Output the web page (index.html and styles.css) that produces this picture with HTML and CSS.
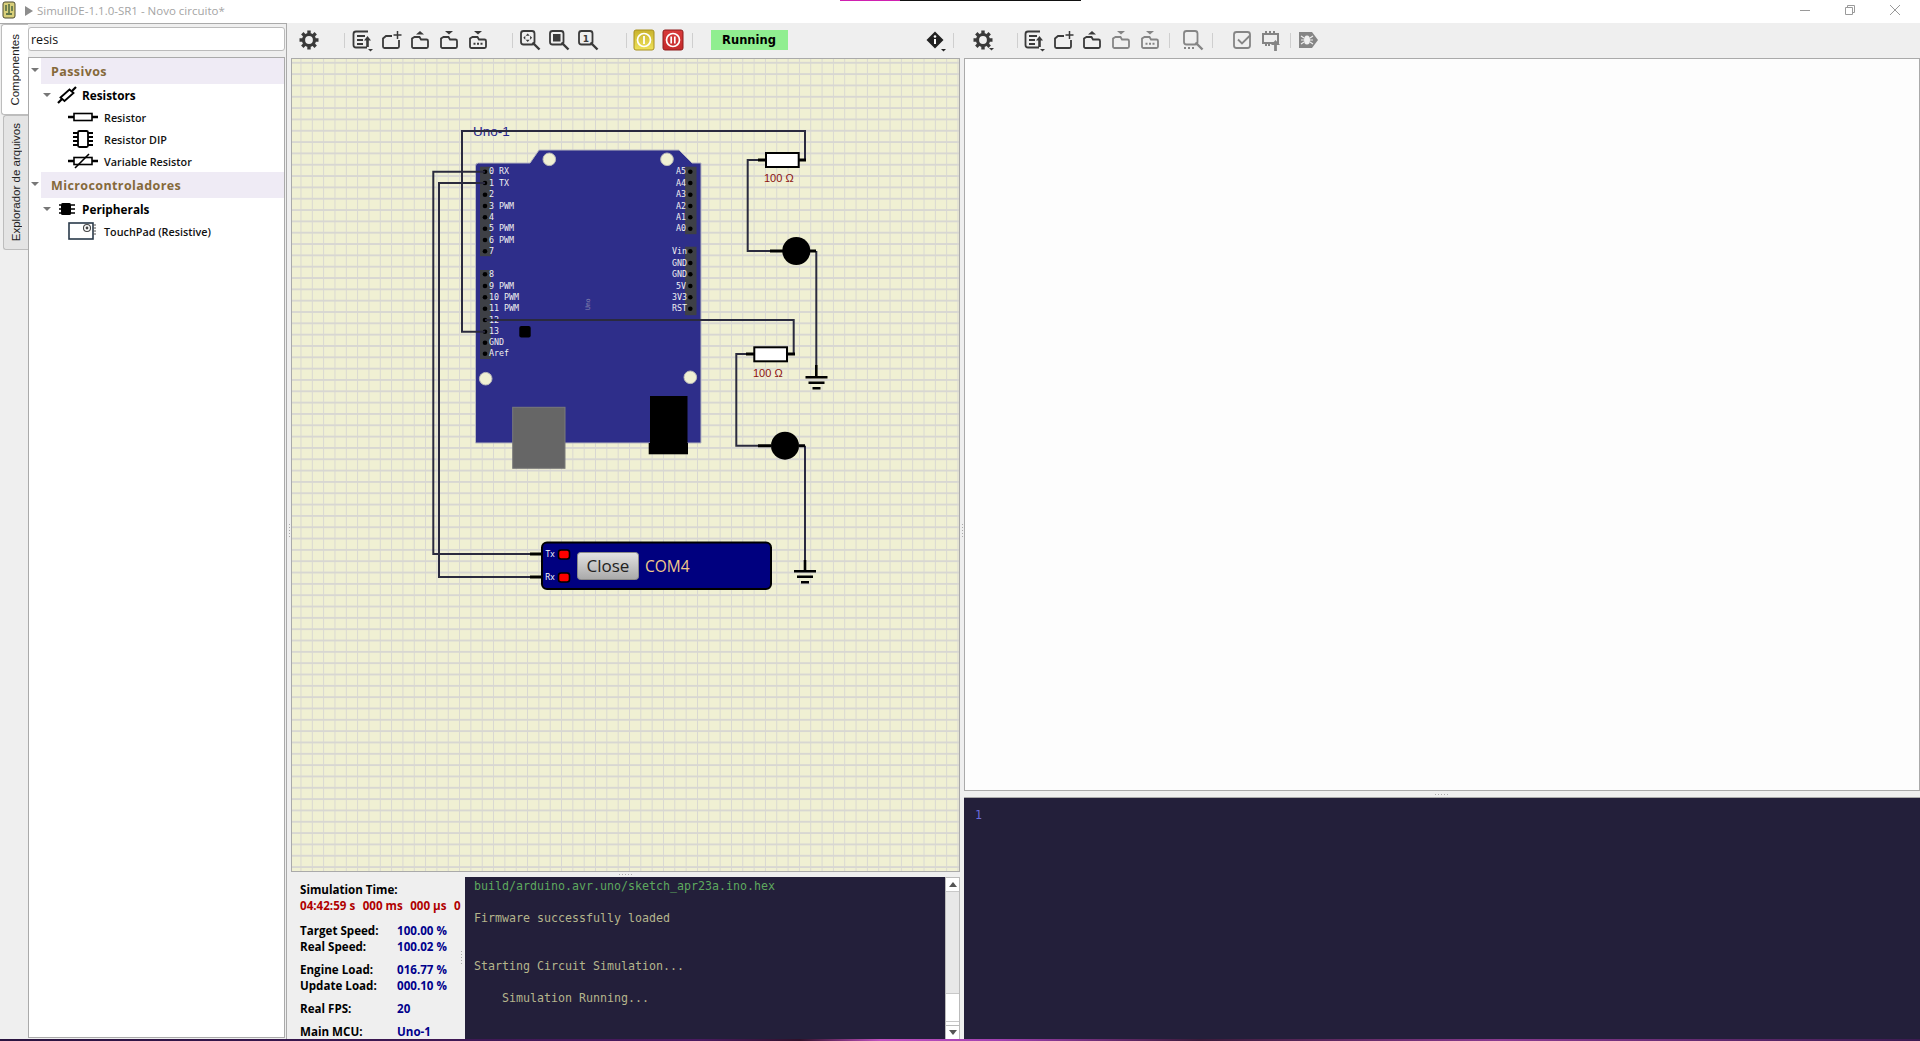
FILE: index.html
```html
<!DOCTYPE html>
<html lang="pt">
<head>
    <meta charset="UTF-8">
    <title>SimulIDE-1.1.0-SR1 - Novo circuito*</title>
    <link rel="stylesheet" href="styles.css">
</head>
<body>
    <!-- shared toolbar icons -->
    <svg class="icon-defs" width="0" height="0">
        <symbol id="i-gear" viewBox="0 0 24 24">
            <circle cx="12" cy="12" r="5.5" fill="none" stroke="currentColor" stroke-width="3.2"/>
            <path d="M12 2.500v4M12 17.500v4M2.500 12h4M17.500 12h4M5.300 5.300l2.800 2.800M15.900 15.900l2.800 2.800M5.300 18.700l2.800-2.800M15.900 8.100l2.800-2.800" stroke="currentColor" stroke-width="3.400" fill="none"/>
        </symbol>
        <symbol id="i-drop" viewBox="0 0 24 24">
            <path d="M18 20h5l-2.500 2.500z" fill="currentColor"/>
        </symbol>
        <symbol id="i-list" viewBox="0 0 24 24">
            <path d="M18 3.500H6A2.500 2.500 0 0 0 3.500 6v11A2.500 2.500 0 0 0 6 19.500h11" fill="none" stroke="currentColor" stroke-width="1.800"/>
            <path d="M7 8h8M7 12h6M7 16h6" stroke="currentColor" stroke-width="2" fill="none"/>
            <path d="M17.500 19v-7" stroke="currentColor" stroke-width="2.600"/>
            <path d="M14 12.500l3.500-4.500 3.500 4.500z" fill="currentColor"/>
            <path d="M18 21h5l-2.500 2.500z" fill="currentColor"/>
        </symbol>
        <symbol id="i-new" viewBox="0 0 24 24">
            <path d="M13 8H7L4 10.500v8A1.500 1.500 0 0 0 5.500 20h13a1.500 1.500 0 0 0 1.500-1.500V12" fill="none" stroke="currentColor" stroke-width="1.800"/>
            <path d="M18.500 3v8M14.500 7h8" stroke="currentColor" stroke-width="1.500" fill="none"/>
        </symbol>
        <symbol id="i-open" viewBox="0 0 24 24">
            <path d="M4 18.500V10.500L6.500 9h5l1.500 2.500h5.500A1.500 1.500 0 0 1 20 13v5.500a1.500 1.500 0 0 1-1.500 1.500h-13A1.500 1.500 0 0 1 4 18.500z" fill="none" stroke="currentColor" stroke-width="1.800"/>
            <path d="M8 6.500L12 3l4 3.500z" fill="currentColor"/>
        </symbol>
        <symbol id="i-save" viewBox="0 0 24 24">
            <path d="M4 18.500V10.500L6.500 9h5l1.500 2.500h5.500A1.500 1.500 0 0 1 20 13v5.500a1.500 1.500 0 0 1-1.500 1.500h-13A1.500 1.500 0 0 1 4 18.500z" fill="none" stroke="currentColor" stroke-width="1.800"/>
            <path d="M8 3h8l-4 3.500z" fill="currentColor"/>
        </symbol>
        <symbol id="i-saveas" viewBox="0 0 24 24">
            <path d="M4 18.500V10.500L6.500 9h5l1.500 2.500h5.500A1.500 1.500 0 0 1 20 13v5.500a1.500 1.500 0 0 1-1.500 1.500h-13A1.500 1.500 0 0 1 4 18.500z" fill="none" stroke="currentColor" stroke-width="1.800"/>
            <path d="M8 3h8l-4 3.500z" fill="currentColor"/>
            <path d="M7.500 15.800h2M11 15.800h2M14.500 15.800h2" stroke="currentColor" stroke-width="2"/>
        </symbol>
        <symbol id="i-lens" viewBox="0 0 24 24">
            <rect x="3" y="3" width="13.500" height="13.500" rx="2.500" fill="none" stroke="currentColor" stroke-width="1.800"/>
            <path d="M14.500 14.500l7 7" stroke="currentColor" stroke-width="2.400"/>
        </symbol>
    </svg>

    <div class="window">
        <header class="titlebar">
            <svg class="app-icon" width="16" height="18" viewBox="0 0 16 18">
                <rect x="2" y="1" width="12" height="16" rx="2" fill="#d8cf7a" stroke="#4a4a30"/>
                <path d="M5 4v6M8 3v9M11 5v5M5 13h6" stroke="#3a5a3a" stroke-width="1.300" fill="none"/>
            </svg>
            <span class="title-arrow"></span>
            <span class="title-text">SimulIDE-1.1.0-SR1 - Novo circuito*</span>
            <div class="win-controls">
                <svg width="10" height="10" viewBox="0 0 10 10"><path d="M0 5.500h10" stroke="#9a9a9a"/></svg>
                <svg width="10" height="10" viewBox="0 0 10 10"><path d="M.5 2.500h7v7h-7zM2.500 2.500v-2h7v7h-2" fill="none" stroke="#9a9a9a"/></svg>
                <svg width="10" height="10" viewBox="0 0 10 10"><path d="M0 0l10 10M10 0L0 10" stroke="#9a9a9a"/></svg>
            </div>
            <div class="screen-sliver"></div>
        </header>

        <div class="main">
            <nav class="side-tabs">
                <div class="side-tab active"><span>Componentes</span></div>
                <div class="side-tab"><span>Explorador de arquivos</span></div>
            </nav>

            <aside class="left-panel">
                <input class="search" type="text" value="resis">
                <div class="tree">
                    <div class="tree-head"><span class="tri"></span><div class="tree-head-label">Passivos</div></div>
                    <div class="tree-cat">
                        <span class="tri"></span>
                        <svg class="cat-icon" width="20" height="18" viewBox="0 0 20 18">
                            <path d="M1 17l4-4M15 5l4-4" stroke="#000" stroke-width="2.200"/>
                            <path d="M3.500 11.500l9-8 4 3.500-9 8z" fill="#fff" stroke="#000" stroke-width="1.800"/>
                        </svg>
                        <span>Resistors</span>
                    </div>
                    <div class="tree-item">
                        <svg width="30" height="14" viewBox="0 0 30 14">
                            <path d="M0 7h6M24 7h6" stroke="#000" stroke-width="2.600"/>
                            <rect x="6" y="3.500" width="18" height="7" fill="#fff" stroke="#000" stroke-width="1.600"/>
                        </svg>
                        <span>Resistor</span>
                    </div>
                    <div class="tree-item">
                        <svg width="30" height="20" viewBox="0 0 30 20">
                            <rect x="10" y="2" width="10" height="16" rx="1.500" fill="#fff" stroke="#000" stroke-width="1.800"/>
                            <path d="M5 4h5M5 8h5M5 12h5M5 16h5M20 4h5M20 8h5M20 12h5M20 16h5" stroke="#000" stroke-width="1.800"/>
                        </svg>
                        <span>Resistor DIP</span>
                    </div>
                    <div class="tree-item">
                        <svg width="30" height="18" viewBox="0 0 30 18">
                            <path d="M0 9h6M24 9h6" stroke="#000" stroke-width="2.600"/>
                            <rect x="6" y="5.500" width="18" height="7" fill="#fff" stroke="#000" stroke-width="1.600"/>
                            <path d="M7 16L21 2" stroke="#000" stroke-width="1.600"/>
                        </svg>
                        <span>Variable Resistor</span>
                    </div>
                    <div class="tree-head"><span class="tri"></span><div class="tree-head-label">Microcontroladores</div></div>
                    <div class="tree-cat">
                        <span class="tri"></span>
                        <svg class="cat-icon" width="20" height="14" viewBox="0 0 20 14">
                            <rect x="4" y="1" width="10" height="12" rx="1.500" fill="#000"/>
                            <path d="M2 3h2M2 7h2M2 11h2M14 3h4M14 7h4M14 11h4" stroke="#000" stroke-width="1.600"/>
                        </svg>
                        <span>Peripherals</span>
                    </div>
                    <div class="tree-item">
                        <svg width="30" height="20" viewBox="0 0 30 20">
                            <rect x="1" y="2" width="24" height="16" fill="#fff" stroke="#2a3a4a" stroke-width="1.600"/>
                            <circle cx="19" cy="7" r="3.500" fill="none" stroke="#444" stroke-width="1.100"/>
                            <circle cx="19" cy="7" r="1.400" fill="#444"/>
                            <path d="M25 4h3M25 7h3M25 10h3M25 13h3" stroke="#555"/>
                        </svg>
                        <span>TouchPad (Resistive)</span>
                    </div>
                </div>
            </aside>

            <div class="v-split"><i class="dots-v"></i></div>

            <section class="center">
                <div class="toolbar">
                    <button class="tool tool-first"><svg width="24" height="24"><use href="#i-gear"/></svg></button>
                    <span class="sep sep-a"></span>
                    <button class="tool"><svg width="24" height="24"><use href="#i-list"/></svg></button>
                    <button class="tool"><svg width="24" height="24"><use href="#i-new"/></svg></button>
                    <button class="tool"><svg width="24" height="24"><use href="#i-open"/></svg></button>
                    <button class="tool"><svg width="24" height="24"><use href="#i-save"/></svg></button>
                    <button class="tool"><svg width="24" height="24"><use href="#i-saveas"/></svg></button>
                    <span class="sep sep-a2"></span>
                    <button class="tool">
                        <svg width="24" height="24">
                            <use href="#i-lens"/>
                            <path d="M9.700 5.500l2 2.200h-4zM9.700 14l2-2.200h-4zM5.300 9.700l2-2v4zM14.100 9.700l-2-2v4z" fill="currentColor"/>
                        </svg>
                    </button>
                    <button class="tool">
                        <svg width="24" height="24">
                            <use href="#i-lens"/>
                            <rect x="6" y="6" width="7.500" height="7.500" fill="currentColor"/>
                        </svg>
                    </button>
                    <button class="tool">
                        <svg width="24" height="24">
                            <use href="#i-lens"/>
                            <text x="9.800" y="14" class="lens-one">1</text>
                        </svg>
                    </button>
                    <span class="sep sep-b"></span>
                    <button class="tool">
                        <svg width="22" height="22" viewBox="0 0 22 22">
                            <defs>
                                <linearGradient id="g-yellow" x1="0" y1="0" x2="0" y2="1">
                                    <stop offset="0" stop-color="#c9b32c"/><stop offset="1" stop-color="#efe25a"/>
                                </linearGradient>
                                <linearGradient id="g-red" x1="0" y1="0" x2="0" y2="1">
                                    <stop offset="0" stop-color="#d83a3a"/><stop offset="1" stop-color="#c42a2a"/>
                                </linearGradient>
                            </defs>
                            <rect x="1" y="1" width="20" height="20" rx="2" fill="url(#g-yellow)" stroke="#a8901e"/>
                            <circle cx="11" cy="11" r="6.500" fill="none" stroke="#fff" stroke-width="1.700"/>
                            <path d="M11 7v8" stroke="#fff" stroke-width="1.800"/>
                        </svg>
                    </button>
                    <button class="tool">
                        <svg width="22" height="22" viewBox="0 0 22 22">
                            <rect x="1" y="1" width="20" height="20" rx="2" fill="url(#g-red)" stroke="#8e1c1c"/>
                            <circle cx="11" cy="11" r="6.500" fill="none" stroke="#fff" stroke-width="1.700"/>
                            <path d="M9.200 7.500v7M12.800 7.500v7" stroke="#fff" stroke-width="1.700"/>
                        </svg>
                    </button>
                    <span class="sep sep-c"></span>
                    <div class="run-state">Running</div>
                    <button class="tool tool-push">
                        <svg width="24" height="24" viewBox="0 0 24 24">
                            <path d="M12 3.500l8.500 8.500-8.500 8.500L3.500 12z" fill="#222"/>
                            <circle cx="12" cy="8.500" r="1.300" fill="#fff"/>
                            <path d="M12 11v5" stroke="#fff" stroke-width="2"/>
                            <path d="M18 21h5l-2.500 2.500z" fill="#222"/>
                        </svg>
                    </button>
                    <span class="sep sep-d"></span>
                </div>

                <div class="canvas">
                    <svg class="circuit" width="667" height="812" viewBox="292 59 667 812">
                        <text x="473" y="136" class="comp-name">Uno-1</text>

                        <!-- board -->
                        <path class="board" d="M475.500 166q0-3 3-3H530l9-13h140l13 13h9v280H475.500z"/>
                        <circle class="hole" cx="549.300" cy="159.300" r="6.300"/>
                        <circle class="hole" cx="667" cy="159.300" r="6.300"/>
                        <circle class="hole" cx="485.700" cy="378.700" r="6.300"/>
                        <circle class="hole" cx="690.300" cy="377.300" r="6.300"/>
                        <rect class="header" x="480" y="166.700" width="11" height="89.500"/>
                        <rect class="header" x="480" y="270" width="11" height="89"/>
                        <rect class="header" x="685" y="166.700" width="11.500" height="67.500"/>
                        <rect class="header" x="685" y="246.700" width="11.500" height="68.500"/>

                        <g class="pins">
                            <circle cx="485" cy="171.700" r="2.300"/><circle cx="485" cy="183" r="2.300"/>
                            <circle cx="485" cy="194.700" r="2.300"/><circle cx="485" cy="206" r="2.300"/>
                            <circle cx="485" cy="217.300" r="2.300"/><circle cx="485" cy="228.700" r="2.300"/>
                            <circle cx="485" cy="240" r="2.300"/><circle cx="485" cy="251.300" r="2.300"/>
                            <circle cx="485" cy="274.300" r="2.300"/><circle cx="485" cy="286" r="2.300"/>
                            <circle cx="485" cy="297.300" r="2.300"/><circle cx="485" cy="308.700" r="2.300"/>
                            <circle cx="485" cy="320" r="2.300"/><circle cx="485" cy="331.700" r="2.300"/>
                            <circle cx="485" cy="342.700" r="2.300"/><circle cx="485" cy="353.700" r="2.300"/>
                            <circle cx="690.300" cy="171.700" r="2.300"/><circle cx="690.300" cy="183" r="2.300"/>
                            <circle cx="690.300" cy="194.700" r="2.300"/><circle cx="690.300" cy="206" r="2.300"/>
                            <circle cx="690.300" cy="217.300" r="2.300"/><circle cx="690.300" cy="228.700" r="2.300"/>
                            <circle cx="690.300" cy="251.300" r="2.300"/><circle cx="690.300" cy="263" r="2.300"/>
                            <circle cx="690.300" cy="274.300" r="2.300"/><circle cx="690.300" cy="286" r="2.300"/>
                            <circle cx="690.300" cy="297.300" r="2.300"/><circle cx="690.300" cy="308.700" r="2.300"/>
                        </g>

                        <g class="pin-label">
                            <text x="489" y="174">0 RX</text><text x="489" y="185.500">1 TX</text>
                            <text x="489" y="197">2</text><text x="489" y="208.500">3 PWM</text>
                            <text x="489" y="219.500">4</text><text x="489" y="231">5 PWM</text>
                            <text x="489" y="242.500">6 PWM</text><text x="489" y="253.500">7</text>
                            <text x="489" y="276.500">8</text><text x="489" y="288.500">9 PWM</text>
                            <text x="489" y="299.500">10 PWM</text><text x="489" y="311">11 PWM</text>
                            <text x="489" y="322.500">12</text><text x="489" y="334">13</text>
                            <text x="489" y="345">GND</text><text x="489" y="356">Aref</text>
                        </g>
                        <g class="pin-label pin-label-end">
                            <text x="686" y="174">A5</text><text x="686" y="185.500">A4</text>
                            <text x="686" y="197">A3</text><text x="686" y="208.500">A2</text>
                            <text x="686" y="219.500">A1</text><text x="686" y="231">A0</text>
                            <text x="687" y="253.500">Vin</text><text x="687" y="265.500">GND</text>
                            <text x="687" y="276.500">GND</text><text x="686" y="288.500">5V</text>
                            <text x="687" y="299.500">3V3</text><text x="687" y="311">RST</text>
                        </g>

                        <text class="board-name" transform="translate(590 310) rotate(-90)">Uno</text>
                        <rect x="519.300" y="326" width="11.400" height="11.400" rx="2" fill="#000"/>
                        <rect x="512.700" y="407.300" width="52.300" height="61" fill="#666" stroke="#7a7a7a"/>
                        <rect x="650" y="396" width="37.500" height="47" fill="#000"/>
                        <rect x="648.700" y="443" width="39.300" height="11.300" fill="#000"/>

                        <!-- wires -->
                        <g class="wire">
                            <path d="M485 331.700H462V131H805V160"/>
                            <path d="M485 171.700H433.300V554H530"/>
                            <path d="M485 183H439V577H530"/>
                            <path d="M485 320H793.700V354"/>
                            <path d="M758 160H747.700V251H770"/>
                            <path d="M816.300 251V365"/>
                            <path d="M746 354H736.300V445.700H758"/>
                            <path d="M805 445.700V560"/>
                        </g>

                        <!-- resistors and leds -->
                        <g class="lead">
                            <path d="M758 160h8M799 160h7"/>
                            <path d="M746 354h8M787 354h8"/>
                            <path d="M770 251h13M810 251h6"/>
                            <path d="M758 445.700h13M799 445.700h6"/>
                            <path d="M530 554h12M530 577h12"/>
                        </g>
                        <rect class="res" x="766" y="153" width="32.700" height="14"/>
                        <rect class="res" x="754.300" y="347.300" width="32.700" height="14"/>
                        <text class="res-val" x="764" y="181.500">100 Ω</text>
                        <text class="res-val" x="753" y="376.500">100 Ω</text>
                        <circle cx="796.300" cy="251" r="14"/>
                        <circle cx="785" cy="445.700" r="14"/>

                        <!-- grounds -->
                        <g class="ground">
                            <path d="M816.300 365v12"/>
                            <path d="M805.500 377.300h22M808.500 382.700h16M812.500 388.300h8"/>
                            <path d="M805 560v11.300"/>
                            <path d="M794 571.300h22M797 576.700h16M801 582.300h8"/>
                        </g>

                        <!-- serial port -->
                        <rect class="port" x="542" y="542.500" width="229" height="46.500" rx="5"/>
                        <text class="port-pin" x="545.500" y="556.500">Tx</text>
                        <text class="port-pin" x="545" y="579.500">Rx</text>
                        <rect class="port-led" x="558.500" y="550" width="11" height="9" rx="2.500"/>
                        <rect class="port-led" x="558.500" y="573" width="11" height="9" rx="2.500"/>
                        <defs>
                            <linearGradient id="g-close" x1="0" y1="0" x2="0" y2="1">
                                <stop offset="0" stop-color="#e2e2e2"/><stop offset="1" stop-color="#a9a9a9"/>
                            </linearGradient>
                        </defs>
                        <rect x="577.500" y="552.500" width="61" height="27" rx="3" fill="url(#g-close)" stroke="#8a8a8a"/>
                        <text class="port-close" x="586.500" y="572">Close</text>
                        <text class="port-name" x="645" y="572">COM4</text>
                    </svg>
                </div>

                <div class="h-split"><i class="dots-h"></i></div>

                <div class="bottom-row">
                    <div class="sim-info">
                        <div class="sim-title">Simulation Time:</div>
                        <div class="sim-time"><span>04:42:59 s</span><span>000 ms</span><span>000 µs</span><span>0</span></div>
                        <div class="sim-row sim-first"><b>Target Speed:</b><em>100.00 %</em></div>
                        <div class="sim-row"><b>Real Speed:</b><em>100.02 %</em></div>
                        <div class="sim-row sim-gap"><b>Engine Load:</b><em>016.77 %</em></div>
                        <div class="sim-row"><b>Update Load:</b><em>000.10 %</em></div>
                        <div class="sim-row sim-gap"><b>Real FPS:</b><em>20</em></div>
                        <div class="sim-row sim-gap"><b>Main MCU:</b><em>Uno-1</em></div>
                    </div>
                    <i class="dots-v dots-info"></i>
                    <pre class="output"><span class="out-path">build/arduino.avr.uno/sketch_apr23a.ino.hex</span>

Firmware successfully loaded


Starting Circuit Simulation...

    Simulation Running...</pre>
                    <div class="scrollbar">
                        <div class="sb-btn"><span class="sb-up"></span></div>
                        <div class="sb-track"></div>
                        <div class="sb-handle"></div>
                        <div class="sb-btn sb-btn-down"><span class="sb-down"></span></div>
                    </div>
                </div>
            </section>

            <div class="v-split"><i class="dots-v"></i></div>

            <section class="right">
                <div class="toolbar">
                    <button class="tool tool-first-r">
                        <svg width="24" height="24"><use href="#i-gear"/><use href="#i-drop"/></svg>
                    </button>
                    <span class="sep sep-e"></span>
                    <button class="tool"><svg width="24" height="24"><use href="#i-list"/></svg></button>
                    <button class="tool"><svg width="24" height="24"><use href="#i-new"/></svg></button>
                    <button class="tool"><svg width="24" height="24"><use href="#i-open"/></svg></button>
                    <button class="tool off"><svg width="24" height="24"><use href="#i-save"/></svg></button>
                    <button class="tool off"><svg width="24" height="24"><use href="#i-saveas"/></svg></button>
                    <span class="sep sep-f"></span>
                    <button class="tool off">
                        <svg width="24" height="24">
                            <use href="#i-lens"/>
                            <path d="M3 20h2M7 20h2M11 20h2" stroke="currentColor" stroke-width="1.800"/>
                        </svg>
                    </button>
                    <span class="sep sep-g"></span>
                    <button class="tool off">
                        <svg width="24" height="24" viewBox="0 0 24 24">
                            <rect x="4" y="4" width="16" height="16" rx="2.500" fill="none" stroke="currentColor" stroke-width="1.800"/>
                            <path d="M8 11.500l4 4 8-8" fill="none" stroke="currentColor" stroke-width="1.800"/>
                        </svg>
                    </button>
                    <button class="tool off">
                        <svg width="24" height="24" viewBox="0 0 24 24">
                            <rect x="4" y="6" width="15" height="9" fill="none" stroke="currentColor" stroke-width="2"/>
                            <path d="M7 3v3M11 3v3M15 3v3M7 15v3M10 15v3" stroke="currentColor" stroke-width="2"/>
                            <path d="M16.500 23v-7" stroke="currentColor" stroke-width="2.800"/>
                            <path d="M12 17l4.500-5 4.500 5z" fill="currentColor"/>
                        </svg>
                    </button>
                    <span class="sep sep-f2"></span>
                    <button class="tool off">
                        <svg width="24" height="24" viewBox="0 0 24 24">
                            <path d="M3 4h13l6 8-6 8H3z" fill="currentColor"/>
                            <ellipse cx="11" cy="12" rx="3" ry="4.500" fill="#efefef"/>
                            <path d="M5 8l3 2M5 12h3M5 16l3-2M17 8l-3 2M17 12h-3M17 16l-3-2" stroke="#efefef" stroke-width="1.200"/>
                        </svg>
                    </button>
                </div>
                <div class="editor"></div>
                <div class="h-split h-split-r"><i class="dots-h"></i></div>
                <div class="code"><span class="line-no">1</span></div>
            </section>
        </div>

        <div class="wallpaper"></div>
    </div>
</body>
</html>
```

FILE: styles.css
```css
html, body {
    margin: 0;
    padding: 0;
    height: 100%;
    overflow: hidden;
}
body {
    font-family: "Open Sans", "Noto Sans", sans-serif;
    font-size: 12px;
    color: #222;
    background: #efefef;
}
.icon-defs {
    position: absolute;
}
.window {
    display: flex;
    flex-direction: column;
    width: 1920px;
    height: 1041px;
}

/* title bar */
.titlebar {
    position: relative;
    display: flex;
    align-items: center;
    height: 23px;
    flex: none;
    background: #fff;
}
.app-icon {
    margin-left: 1px;
    margin-top: -3px;
}
.title-arrow {
    width: 0;
    height: 0;
    margin: -1px 4px 0 8px;
    border-left: 8px solid #8d8d8d;
    border-top: 5px solid transparent;
    border-bottom: 5px solid transparent;
}
.title-text {
    margin-top: -2px;
    color: #a4a4a4;
    font-size: 11.5px;
}
.win-controls {
    display: flex;
    gap: 35px;
    margin-left: auto;
    margin-right: 20px;
    margin-top: -3px;
}
.screen-sliver {
    position: absolute;
    top: 0;
    left: 840px;
    width: 241px;
    height: 1px;
    background: linear-gradient(to right, #d020b0 0, #d020b0 60px, #111 60px);
}

.main {
    display: flex;
    flex: 1;
    min-height: 0;
}

/* left side */
.side-tabs {
    flex: none;
    width: 28px;
    border-top: 1px solid #aaa;
    box-sizing: border-box;
}
.side-tab {
    display: flex;
    align-items: center;
    justify-content: center;
    box-sizing: border-box;
    margin-left: 3px;
    width: 25px;
    height: 135px;
    background: #e4e4e4;
    border: 1px solid #bdbdbd;
    border-right: none;
    border-radius: 3px 0 0 3px;
}
.side-tab span {
    writing-mode: vertical-rl;
    transform: rotate(180deg);
    font-family: "Liberation Sans", sans-serif;
    font-size: 11.5px;
    white-space: nowrap;
}
.side-tab.active {
    margin-left: 1px;
    width: 27px;
    height: 91px;
    background: #fff;
}
.left-panel {
    display: flex;
    flex-direction: column;
    flex: none;
    box-sizing: border-box;
    width: 259px;
    padding-top: 3px;
    padding-right: 1px;
    border-top: 1px solid #aaa;
    border-right: 1px solid #aaa;
}
.search {
    box-sizing: border-box;
    width: 257px;
    height: 24px;
    padding: 0 2px;
    margin: 0;
    border: 1px solid #bbb;
    border-radius: 3px;
    outline: none;
    font-family: "Open Sans", sans-serif;
    font-size: 12.5px;
    color: #111;
    background: #fff;
}
.tree {
    flex: 1;
    box-sizing: border-box;
    width: 257px;
    margin-top: 6px;
    margin-bottom: 1px;
    border: 1px solid #aaa;
    background: #fff;
    font-weight: 600;
}
.tri {
    flex: none;
    width: 0;
    height: 0;
    border-top: 4px solid #777;
    border-left: 4px solid transparent;
    border-right: 4px solid transparent;
}
.tree-head {
    display: flex;
    align-items: center;
    height: 26px;
}
.tree-head .tri {
    margin: -3px 2px 0 2px;
}
.tree-head-label {
    display: flex;
    align-items: center;
    flex: 1;
    height: 100%;
    padding-left: 10px;
    background: #efebf5;
    color: #85693a;
    font-size: 12.5px;
    font-weight: 700;
    letter-spacing: 0.4px;
}
.tree-cat {
    display: flex;
    align-items: center;
    height: 22px;
    padding-left: 14px;
    font-size: 11.8px;
    font-weight: 700;
    color: #000;
}
.cat-icon {
    margin: 0 5px 0 6px;
}
.tree-item {
    display: flex;
    align-items: center;
    gap: 6px;
    height: 22px;
    padding-left: 39px;
    font-size: 10.8px;
    color: #111;
}

.v-split {
    display: flex;
    align-items: center;
    justify-content: center;
    flex: none;
    width: 4px;
}
.dots-v {
    display: block;
    width: 1px;
    height: 14px;
    background: repeating-linear-gradient(to bottom, #aaa 0, #aaa 1px, transparent 1px, transparent 3px);
}
.dots-h {
    display: block;
    width: 14px;
    height: 1px;
    background: repeating-linear-gradient(to right, #aaa 0, #aaa 1px, transparent 1px, transparent 3px);
}
.h-split {
    display: flex;
    align-items: center;
    justify-content: center;
    flex: none;
    height: 5px;
}
.h-split-r {
    height: 6px;
}

/* center */
.center {
    display: flex;
    flex-direction: column;
    flex: none;
    width: 669px;
}
.toolbar {
    display: flex;
    align-items: center;
    flex: none;
    box-sizing: border-box;
    height: 35px;
    padding-bottom: 1px;
}
.tool {
    display: flex;
    align-items: center;
    justify-content: center;
    flex: none;
    width: 29px;
    height: 29px;
    padding: 0;
    border: none;
    background: none;
    color: #3a3a3a;
}
.tool.off {
    color: #858585;
}
.tool-first {
    margin-left: 3.5px;
}
.tool-first-r {
    margin-left: 4px;
}
.tool-push {
    margin-left: auto;
}
.lens-one {
    font-family: "DejaVu Sans", sans-serif;
    font-size: 9px;
    font-weight: 700;
    text-anchor: middle;
    fill: currentColor;
}
.sep {
    flex: none;
    width: 1px;
    height: 15px;
    background: #cfcfcf;
}
.sep-a { margin: 0 3px 0 20px; }
.sep-a2 { margin: 0 3px 0 19px; }
.sep-b { margin: 0 3px 0 23px; }
.sep-c { margin: 0 18px 0 4px; }
.sep-d { margin: 0 6px 0 4px; }
.sep-e { margin: 0 2px 0 19.5px; }
.sep-f { margin: 0 9px 0 4px; }
.sep-f2 { margin: 0 3px 0 4px; }
.sep-g { margin: 0 15px 0 4px; }
.run-state {
    display: flex;
    align-items: center;
    justify-content: center;
    width: 77px;
    height: 20px;
    background: #90ee90;
    color: #000;
    font-family: "DejaVu Sans", sans-serif;
    font-size: 11.5px;
    font-weight: 700;
}

/* circuit */
.canvas {
    flex: none;
    box-sizing: border-box;
    height: 814px;
    border: 1px solid #aaa;
    background-color: #f0f0d3;
    background-image:
        linear-gradient(to right, transparent 8.1px, #d8d7d2 8.1px, #d8d7d2 9.5px, transparent 9.5px),
        linear-gradient(to bottom, transparent 3.2px, #d8d7d2 3.2px, #d8d7d2 4.6px, transparent 4.6px);
    background-size: 11.33px 11.33px;
}
.circuit {
    display: block;
}
.comp-name {
    font-family: "Liberation Sans", sans-serif;
    font-size: 13.5px;
    fill: #24248c;
}
.board {
    fill: #2e2e8a;
    stroke: #b8b8c0;
    stroke-width: 1;
}
.hole {
    fill: #f0f0d3;
    stroke: #b9b9b9;
}
.header {
    fill: #3e4046;
}
.pins circle {
    fill: #000;
}
.pin-label text {
    font-family: "DejaVu Sans Mono", monospace;
    font-size: 8.300px;
    fill: #f0f0f0;
}
.pin-label-end text {
    text-anchor: end;
}
.board-name {
    font-family: "DejaVu Sans Mono", monospace;
    font-size: 6.500px;
    fill: #8a8ab0;
}
.wire path {
    fill: none;
    stroke: #2a2a3e;
    stroke-width: 2;
}
.lead path {
    fill: none;
    stroke: #000;
    stroke-width: 3;
}
.res {
    fill: #fff;
    stroke: #000;
    stroke-width: 2;
}
.res-val {
    font-family: "Liberation Sans", sans-serif;
    font-size: 11px;
    fill: #8b0f0f;
}
.ground path {
    fill: none;
    stroke: #000;
    stroke-width: 2.600;
}
.port {
    fill: #00007f;
    stroke: #000;
    stroke-width: 2;
}
.port-pin {
    font-family: "Open Sans", sans-serif;
    font-size: 8.500px;
    fill: #fff;
}
.port-led {
    fill: #f00;
    stroke: #000;
    stroke-width: 1.600;
}
.port-close {
    font-family: "Open Sans", sans-serif;
    font-size: 17px;
    fill: #222;
}
.port-name {
    font-family: "Open Sans", sans-serif;
    font-size: 15.500px;
    fill: #f2c98a;
}

/* bottom row */
.bottom-row {
    display: flex;
    flex: 1;
    min-height: 0;
}
.sim-info {
    flex: none;
    box-sizing: border-box;
    width: 170px;
    padding: 5px 0 0 9px;
    overflow: hidden;
    font-size: 11.6px;
    line-height: 16px;
    white-space: nowrap;
}
.sim-title {
    font-weight: 700;
    color: #000;
}
.sim-time {
    display: flex;
    gap: 7.5px;
    font-weight: 700;
    color: #b00000;
}
.sim-row {
    display: grid;
    grid-template-columns: 97px 1fr;
}
.sim-row b {
    color: #000;
}
.sim-row em {
    font-style: normal;
    font-weight: 700;
    color: #00008c;
}
.sim-first {
    margin-top: 9px;
}
.sim-gap {
    margin-top: 7px;
}
.dots-info {
    flex: none;
    align-self: center;
    margin: 0 3px 0 0;
}
.output {
    flex: 1;
    margin: 0;
    padding: 1px 0 0 9px;
    overflow: hidden;
    background: #231f3a;
    color: #b5b58c;
    font-family: "DejaVu Sans Mono", monospace;
    font-size: 11.630px;
    line-height: 16px;
}
.out-path {
    color: #5ea85e;
}
.scrollbar {
    display: flex;
    flex-direction: column;
    flex: none;
    box-sizing: border-box;
    width: 15px;
    border: 1px solid #bbb;
    border-bottom: none;
    background: #fff;
}
.sb-btn {
    display: flex;
    align-items: center;
    justify-content: center;
    flex: none;
    height: 13px;
}
.sb-btn-down {
    margin-top: 3px;
    border-top: 1px solid #bbb;
}
.sb-track {
    flex: 1;
    background: #e8e8e8;
    border-top: 1px solid #c8c8c8;
}
.sb-handle {
    flex: none;
    height: 27px;
    background: #fff;
    border-top: 1px solid #c8c8c8;
    border-bottom: 1px solid #c8c8c8;
}
.sb-up {
    border-bottom: 5px solid #555;
    border-left: 4px solid transparent;
    border-right: 4px solid transparent;
}
.sb-down {
    border-top: 5px solid #555;
    border-left: 4px solid transparent;
    border-right: 4px solid transparent;
}

/* right side */
.right {
    display: flex;
    flex-direction: column;
    flex: 1;
    min-width: 0;
}
.editor {
    flex: none;
    box-sizing: border-box;
    height: 733px;
    border: 1px solid #aaa;
    background: #fdfdfd;
}
.code {
    flex: 1;
    padding: 8px 0 0 11px;
    border-top: 1px solid #aaa;
    background: #231f3a;
}
.line-no {
    color: #6c6cdc;
    font-family: "DejaVu Sans Mono", monospace;
    font-size: 11.630px;
}
.wallpaper {
    flex: none;
    height: 2px;
    background: linear-gradient(to right, #2a1440 0, #4a1a60 700px, #30102a 800px, #c050c0 880px, #a040b0 1000px, #3a1a3a 1200px, #8a3a90 1500px, #3a1a50 1920px);
}
```
